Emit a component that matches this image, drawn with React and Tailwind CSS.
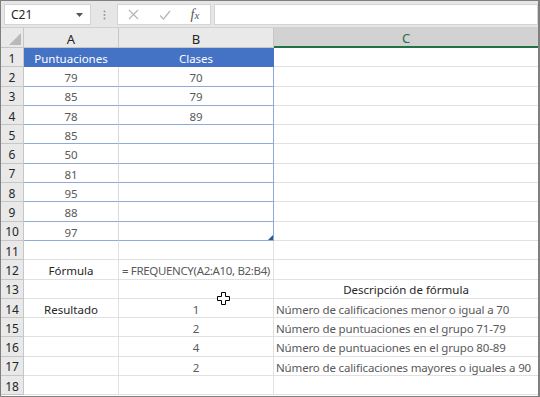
import React from "react";

const rows = [
  { n: 1, a: "Puntuaciones", b: "Clases", kind: "head" },
  { n: 2, a: "79", b: "70", kind: "tbl" },
  { n: 3, a: "85", b: "79", kind: "tbl" },
  { n: 4, a: "78", b: "89", kind: "tbl" },
  { n: 5, a: "85", b: "", kind: "tbl" },
  { n: 6, a: "50", b: "", kind: "tbl" },
  { n: 7, a: "81", b: "", kind: "tbl" },
  { n: 8, a: "95", b: "", kind: "tbl" },
  { n: 9, a: "88", b: "", kind: "tbl" },
  { n: 10, a: "97", b: "", kind: "tbl", handle: true },
  { n: 11, a: "", b: "", kind: "plain" },
  { n: 12, a: "Fórmula", b: "= FREQUENCY(A2:A10, B2:B4)", kind: "plain", dark: true, bLeft: true },
  { n: 13, a: "", b: "", c: "Descripción de fórmula", cCenter: true, kind: "plain" },
  { n: 14, a: "Resultado", b: "1", c: "Número de calificaciones menor o igual a 70", kind: "plain", dark: true },
  { n: 15, a: "", b: "2", c: "Número de puntuaciones en el grupo 71-79", kind: "plain" },
  { n: 16, a: "", b: "4", c: "Número de puntuaciones en el grupo 80-89", kind: "plain" },
  { n: 17, a: "", b: "2", c: "Número de calificaciones mayores o iguales a 90", kind: "plain" },
  { n: 18, a: "", b: "", kind: "plain" },
];

function Row({ r }) {
  const aCls =
    r.kind === "head"
      ? "w-[95px] shrink-0 pt-[3px] bg-[#4472c4] text-white border-b border-r border-[#4472c4] flex items-center justify-center"
      : r.kind === "tbl"
      ? "w-[95px] shrink-0 pt-[3px] text-[#595959] border-b border-b-[#8eaadb] border-r border-r-[#d9d9d9] flex items-center justify-center"
      : r.dark
      ? "w-[95px] shrink-0 pt-[3px] text-[#262626] border-b border-r border-[#e1e1e1] flex items-center justify-center"
      : "w-[95px] shrink-0 pt-[3px] text-[#595959] border-b border-r border-[#e1e1e1] flex items-center justify-center";
  const bCls =
    r.kind === "head"
      ? "relative w-[155px] shrink-0 pt-[3px] bg-[#4472c4] text-white border-b border-r border-[#4472c4] flex items-center justify-center"
      : r.kind === "tbl"
      ? "relative w-[155px] shrink-0 pt-[3px] text-[#595959] border-b border-r border-[#8eaadb] flex items-center justify-center"
      : r.bLeft
      ? "relative w-[155px] shrink-0 pt-[3px] text-[#595959] border-b border-r border-[#e1e1e1] flex items-center justify-start pl-[3px] overflow-hidden whitespace-nowrap tracking-[-0.35px]"
      : "relative w-[155px] shrink-0 pt-[3px] text-[#595959] border-b border-r border-[#e1e1e1] flex items-center justify-center";
  const cCls = r.cCenter
    ? "flex-1 pt-[3px] text-[#262626] border-b border-[#e1e1e1] flex items-center justify-center whitespace-nowrap"
    : "flex-1 pt-[3px] text-[#595959] border-b border-[#e1e1e1] flex items-center justify-start pl-[2px] whitespace-nowrap overflow-hidden tracking-[-0.15px]";
  return (
    <div className="flex h-[19.3px] shrink-0">
      <div className="w-[23px] shrink-0 pt-[3px] bg-[#e9e9e9] border-b border-r border-[#c6c6c6] text-[#262626] text-[12px] flex items-center justify-center">
        {r.n}
      </div>
      <div className={aCls}>{r.a}</div>
      <div className={bCls}>
        {r.b}
        {r.handle && (
          <svg className="absolute right-0 bottom-0" width="5" height="5" viewBox="0 0 5 5">
            <polygon points="5,0 5,5 0,5" fill="#2f5597" />
          </svg>
        )}
      </div>
      <div className={cCls}>{r.c || ""}</div>
    </div>
  );
}

export default function App() {
  return (
    <div
      className="relative w-[540px] h-[397px] overflow-hidden bg-white border border-[#7f7f7f] border-r-2 flex flex-col text-[11.5px] leading-none"
      style={{ fontFamily: '"Noto Sans", "Segoe UI", sans-serif' }}
    >
      {/* Toolbar */}
      <div className="h-[27px] shrink-0 bg-[#e6e6e6] border-b border-[#d0d0d0] flex items-start pt-[3px]">
        <div className="ml-[3px] w-[87px] h-[21px] bg-white border border-[#d4d4d4] flex items-center justify-between pl-[6px] pr-[7px] text-[#262626] text-[12px]">
          <span className="pt-[1px]">C21</span>
          <svg width="7" height="4" viewBox="0 0 7 4">
            <polygon points="0,0 7,0 3.5,4" fill="#555" />
          </svg>
        </div>
        <div className="w-[26px] h-[21px] flex items-center justify-center">
          <svg width="3" height="10" viewBox="0 0 3 10">
            <circle cx="1.5" cy="1.5" r="1" fill="#9a9a9a" />
            <circle cx="1.5" cy="5" r="1" fill="#9a9a9a" />
            <circle cx="1.5" cy="8.5" r="1" fill="#9a9a9a" />
          </svg>
        </div>
        <div className="w-[94px] h-[21px] bg-white border border-[#d4d4d4] flex items-center">
          <div className="w-[31px] flex justify-center">
            <svg width="11" height="11" viewBox="0 0 11 11">
              <path d="M1 1 L10 10 M10 1 L1 10" stroke="#b5b5b5" strokeWidth="1.2" fill="none" />
            </svg>
          </div>
          <div className="w-[31px] flex justify-center">
            <svg width="12" height="10" viewBox="0 0 12 10">
              <path d="M1 5.5 L4.5 9 L11 1" stroke="#b5b5b5" strokeWidth="1.2" fill="none" />
            </svg>
          </div>
          <div className="w-[30px] flex justify-center">
            <span
              className="italic text-[#555] text-[14px]"
              style={{ fontFamily: '"Liberation Serif", serif' }}
            >
              f<span className="text-[11px]">x</span>
            </span>
          </div>
        </div>
        <div className="ml-[3px] flex-1 h-[21px] bg-white border border-[#d4d4d4]" />
      </div>

      {/* Column headers */}
      <div className="flex h-[20px] shrink-0 bg-[#e9e9e9]">
        <div className="relative w-[23px] shrink-0 border-r border-b border-[#c6c6c6]">
          <svg className="absolute right-[2px] bottom-[2px]" width="12" height="12" viewBox="0 0 12 12">
            <polygon points="12,0 12,12 0,12" fill="#b9b9b9" />
          </svg>
        </div>
        <div className="w-[95px] shrink-0 pt-[3px] border-r border-b border-[#c6c6c6] flex items-center justify-center text-[#262626] text-[13px]">
          A
        </div>
        <div className="w-[155px] shrink-0 pt-[3px] border-r border-b border-[#c6c6c6] flex items-center justify-center text-[#262626] text-[13px]">
          B
        </div>
        <div className="flex-1 pt-[3px] bg-[#d2d2d2] border-b-2 border-[#217346] flex items-center justify-center text-[#2d6b4b] text-[13px]">
          C
        </div>
      </div>

      {rows.map((r) => (
        <Row key={r.n} r={r} />
      ))}

      {/* Cursor */}
      <svg className="absolute left-[216px] top-[291px]" width="13" height="13" viewBox="0 0 13 13">
        <path
          d="M4.5 0.5 H8.5 V4.5 H12.5 V8.5 H8.5 V12.5 H4.5 V8.5 H0.5 V4.5 H4.5 Z"
          fill="white"
          stroke="black"
          strokeWidth="1"
        />
      </svg>
    </div>
  );
}
